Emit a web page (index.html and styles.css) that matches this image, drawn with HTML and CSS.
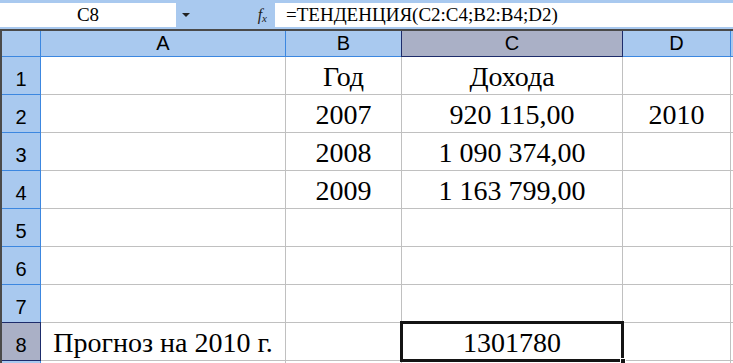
FILE: index.html
```html
<!DOCTYPE html>
<html>
<head>
<meta charset="utf-8">
<link rel="stylesheet" href="styles.css">
</head>
<body>
<div class="app">
  <div class="fbar">
    <div class="namebox">C8</div>
    <div class="fbtns">
      <span class="arrow"></span>
      <span class="fx"><i>f</i><sub>x</sub></span>
    </div>
    <div class="formula">=ТЕНДЕНЦИЯ(C2:C4;B2:B4;D2)</div>
  </div>
  <div class="sheet">
    <div class="hd corner"></div>
    <div class="hd col">A</div>
    <div class="hd col">B</div>
    <div class="hd col sel">C</div>
    <div class="hd col">D</div>
    <div class="hd col"></div>

    <div class="hd row">1</div><div class="c"></div><div class="c">Год</div><div class="c">Дохода</div><div class="c"></div><div class="c"></div>
    <div class="hd row">2</div><div class="c"></div><div class="c">2007</div><div class="c">920 115,00</div><div class="c">2010</div><div class="c"></div>
    <div class="hd row">3</div><div class="c"></div><div class="c">2008</div><div class="c">1 090 374,00</div><div class="c"></div><div class="c"></div>
    <div class="hd row">4</div><div class="c"></div><div class="c">2009</div><div class="c">1 163 799,00</div><div class="c"></div><div class="c"></div>
    <div class="hd row">5</div><div class="c"></div><div class="c"></div><div class="c"></div><div class="c"></div><div class="c"></div>
    <div class="hd row">6</div><div class="c"></div><div class="c"></div><div class="c"></div><div class="c"></div><div class="c"></div>
    <div class="hd row">7</div><div class="c"></div><div class="c"></div><div class="c"></div><div class="c"></div><div class="c"></div>
    <div class="hd row sel">8</div><div class="c">Прогноз на 2010 г.</div><div class="c"></div><div class="c active">1301780</div><div class="c"></div><div class="c"></div>
    <div class="hd row"></div><div class="c"></div><div class="c"></div><div class="c"></div><div class="c"></div><div class="c"></div>
  </div>
</div>
</body>
</html>
```

FILE: styles.css
```css
html, body {
  margin: 0;
  padding: 0;
  background: #fff;
  overflow: hidden;
}
.app {
  width: 733px;
  height: 363px;
  overflow: hidden;
}
.fbar {
  display: flex;
  height: 24px;
  border-top: 3px solid #a9c9ef;
  border-bottom: 2px solid #a9c9ef;
  background: #a9c9ef;
}
.namebox {
  width: 176px;
  background: #fff;
  font-family: "Liberation Serif", "Times New Roman", serif;
  font-size: 19px;
  line-height: 24px;
  text-align: center;
  color: #000;
}
.fbtns {
  width: 99px;
  display: flex;
  align-items: center;
}
.arrow {
  margin-left: 6px;
  width: 0;
  height: 0;
  border-left: 4px solid transparent;
  border-right: 4px solid transparent;
  border-top: 4px solid #222;
}
.fx {
  margin-left: auto;
  margin-right: 8px;
  font-family: "Liberation Serif", "Times New Roman", serif;
  font-size: 16px;
  color: #222;
  line-height: 1;
}
.fx i { font-style: italic; }
.fx sub {
  font-size: 11px;
  font-style: italic;
  vertical-align: -2px;
}
.formula {
  flex: 1;
  background: #fff;
  font-family: "Liberation Serif", "Times New Roman", serif;
  font-size: 19px;
  line-height: 24px;
  padding-left: 11px;
  color: #000;
  white-space: nowrap;
}
.sheet {
  display: grid;
  grid-template-columns: 39px 245px 116px 221px 108px 60px;
  grid-template-rows: 26px repeat(9, 38px);
  border-top: 2px solid #4a4a4a;
  border-left: 2px solid #4a4a4a;
}
.hd {
  background: #a9c9ef;
  box-sizing: border-box;
  border-right: 1px solid #3c87e0;
  border-bottom: 1px solid #3c87e0;
  font-family: "Liberation Sans", Arial, sans-serif;
  color: #000;
  display: flex;
  justify-content: center;
}
.hd.col {
  font-size: 20px;
  align-items: center;
}
.hd.row {
  font-size: 20px;
  align-items: flex-end;
  padding-bottom: 3px;
}
.hd.col.sel {
  background: #aab0c6;
  border-left: 1px solid #1d2c6b;
  border-right: 1px solid #1d2c6b;
  border-bottom: 1px solid #1d2c6b;
  margin-left: -1px;
}
.hd.row.sel {
  background: #aab0c6;
  border-right: 1px solid #1d2c6b;
  border-bottom: 1px solid #1d2c6b;
  border-top: 1px solid #1d2c6b;
  margin-top: -1px;
}
.c {
  box-sizing: border-box;
  border-right: 1px solid #c0c0c0;
  border-bottom: 1px solid #c0c0c0;
  font-family: "Liberation Serif", "Times New Roman", serif;
  font-size: 28px;
  color: #000;
  display: flex;
  justify-content: center;
  align-items: flex-end;
  padding-bottom: 1px;
  white-space: nowrap;
}
.c.active {
  position: relative;
}
.c.active::before {
  content: "";
  position: absolute;
  left: -2px;
  top: -2px;
  right: -2px;
  bottom: -2px;
  border: 3px solid #141414;
}
.c.active::after {
  content: "";
  position: absolute;
  right: -4px;
  bottom: -4px;
  width: 6px;
  height: 6px;
  background: #141414;
  border: 1px solid #fff;
  box-sizing: border-box;
}
```
